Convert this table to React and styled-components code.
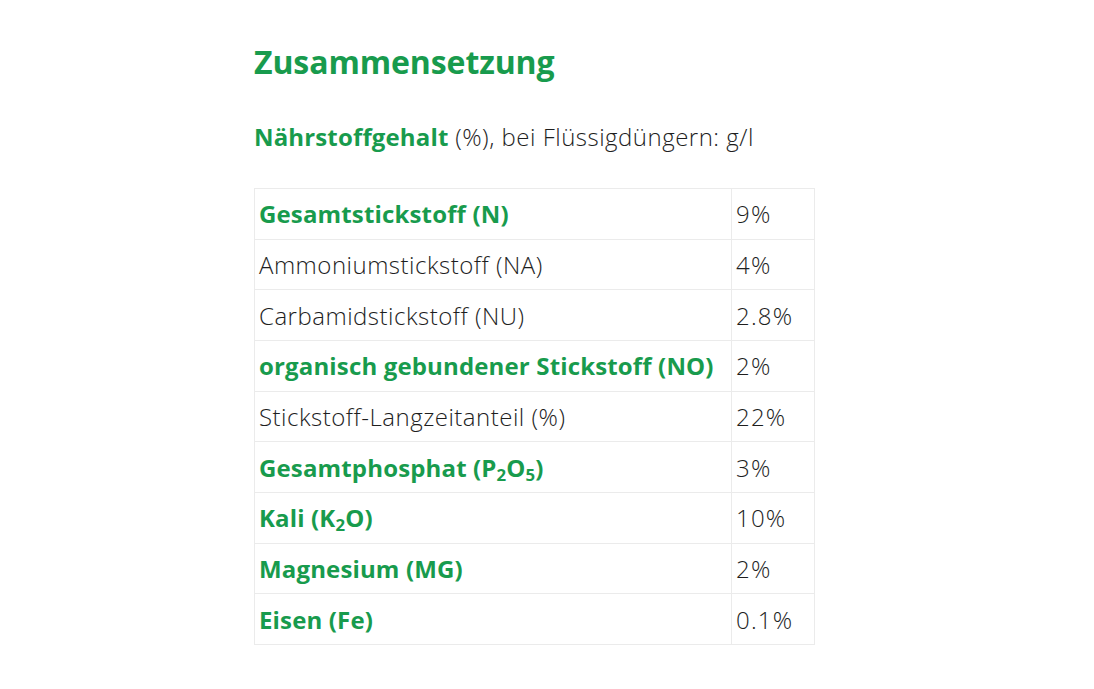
import React from "react";
import styled, { createGlobalStyle } from "styled-components";

const Global = createGlobalStyle`
  html, body { margin: 0; padding: 0; background: #fff; }
  body { font-family: "Open Sans", "Noto Sans", sans-serif; }
`;

const GREEN = "#189b4d";

const Page = styled.div`
  padding: 40px 0 0 254px;
  width: 561px;
`;

const Title = styled.h1`
  margin: 0;
  font-size: 32px;
  line-height: 44px;
  font-weight: 700;
  color: ${GREEN};
  letter-spacing: -0.1px;
`;

const Sub = styled.p`
  margin: 38px 0 0;
  font-size: 24px;
  line-height: 30px;
  font-weight: 300;
  color: #1e1e1e;
  letter-spacing: 0.5px;
`;

const Strong = styled.span`
  font-weight: 700;
  color: ${GREEN};
  letter-spacing: 0.15px;
`;

const Table = styled.table`
  margin-top: 36px;
  border-collapse: collapse;
  width: 560px;
  table-layout: fixed;
`;

const Cell = styled.td`
  border: 1px solid #ebebeb;
  height: 50.67px;
  padding: 0 4px;
  box-sizing: border-box;
  font-size: 24px;
  font-weight: ${(p) => (p.$bold ? 700 : 300)};
  letter-spacing: ${(p) => (p.$bold ? "0.15px" : p.$value ? "1.2px" : "0.5px")};
  color: ${(p) => (p.$bold ? GREEN : "#1e1e1e")};
  white-space: nowrap;
  vertical-align: middle;
`;

const Sub2 = styled.sub`
  font-size: 0.7em;
  vertical-align: -0.25em;
  line-height: 0;
`;

const rows = [
  [<>Gesamtstickstoff (N)</>, "9%", true],
  [<>Ammoniumstickstoff (NA)</>, "4%", false],
  [<>Carbamidstickstoff (NU)</>, "2.8%", false],
  [<>organisch gebundener Stickstoff (NO)</>, "2%", true],
  [<>Stickstoff-Langzeitanteil (%)</>, "22%", false],
  [<>Gesamtphosphat (P<Sub2>2</Sub2>O<Sub2>5</Sub2>)</>, "3%", true],
  [<>Kali (K<Sub2>2</Sub2>O)</>, "10%", true],
  [<>Magnesium (MG)</>, "2%", true],
  [<>Eisen (Fe)</>, "0.1%", true],
];

export default function App() {
  return (
    <>
      <Global />
      <Page>
        <Title>Zusammensetzung</Title>
        <Sub>
          <Strong>Nährstoffgehalt</Strong> (%), bei Flüssigdüngern: g/l
        </Sub>
        <Table>
          <colgroup>
            <col style={{ width: "477px" }} />
            <col style={{ width: "83px" }} />
          </colgroup>
          <tbody>
            {rows.map(([label, value, bold], i) => (
              <tr key={i}>
                <Cell $bold={bold}>{label}</Cell>
                <Cell $value>{value}</Cell>
              </tr>
            ))}
          </tbody>
        </Table>
      </Page>
    </>
  );
}
